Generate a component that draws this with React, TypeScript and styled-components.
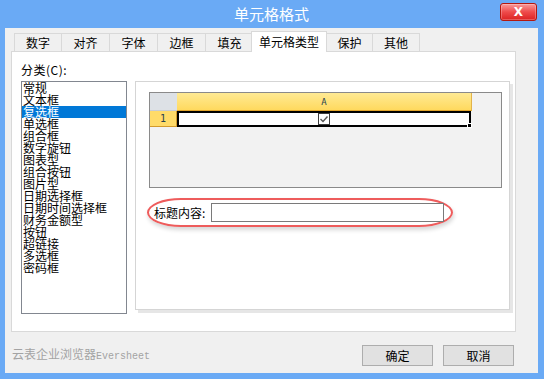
import React from 'react';
import styled, { createGlobalStyle } from 'styled-components';

const GlobalStyle = createGlobalStyle`
  html, body {
    margin: 0;
    padding: 0;
  }
  body {
    font-family: "Noto Sans CJK SC", "Liberation Sans", sans-serif;
    font-size: 12px;
    color: #000;
  }
`;

const Window = styled.div`
  width: 544px;
  height: 379px;
  box-sizing: border-box;
  background: #6aaaf5;
  padding: 0 6px 6px 5px;
  display: flex;
  flex-direction: column;
`;

const TitleBar = styled.div`
  height: 28px;
  flex: none;
  display: grid;
  grid-template-columns: 1fr auto 1fr;
  align-items: start;
`;

const Title = styled.div`
  grid-column: 2;
  color: #fff;
  font-size: 15px;
  line-height: 28px;
`;

const CloseButton = styled.div`
  grid-column: 3;
  justify-self: end;
  margin: 3px 1px 0 0;
  width: 37px;
  height: 18px;
  box-sizing: border-box;
  border: 1px solid #b3180f;
  border-radius: 3px;
  background: linear-gradient(#f99a9a, #ee4b4b 50%, #dc2222);
  box-shadow: inset 0 0 0 1px rgba(255, 255, 255, 0.25);
  color: #fff;
  font-family: "DejaVu Sans", sans-serif;
  font-weight: bold;
  font-size: 12px;
  line-height: 16px;
  text-align: center;
`;

const Client = styled.div`
  flex: 1;
  background: #f0f0f0;
  padding-top: 3px;
  display: flex;
  flex-direction: column;
`;

const TabStrip = styled.div`
  display: flex;
  align-items: flex-end;
  height: 21px;
  padding-left: 9px;
`;

const Tab = styled.div<{ $active?: boolean; $w: number }>`
  box-sizing: border-box;
  width: ${(p) => p.$w}px;
  height: ${(p) => (p.$active ? 21 : 18)}px;
  margin: 0 -1px ${(p) => (p.$active ? 0 : 1)}px ${(p) => (p.$active ? -2 : 0)}px;
  border: 1px solid #d9d9d9;
  border-bottom: none;
  background: ${(p) => (p.$active ? '#fff' : '#f0f0f0')};
  position: relative;
  z-index: ${(p) => (p.$active ? 2 : 1)};
  text-align: center;
  font-size: 12px;
  line-height: ${(p) => (p.$active ? 19 : 17)}px;
`;

const Panel = styled.div`
  margin: -1px 22px 0 6px;
  height: 281px;
  box-sizing: border-box;
  background: #fff;
  border: 1px solid #d9d9d9;
  padding: 11px 0 0 9px;
  display: grid;
  grid-template-columns: 106px 375px;
  grid-template-rows: 14px auto;
  column-gap: 8px;
  row-gap: 4px;
  align-content: start;
`;

const FieldLabel = styled.div`
  grid-column: 1;
  grid-row: 1;
  font-size: 12px;
  line-height: 14px;
  letter-spacing: 0.5px;
  white-space: nowrap;
`;

const ListBox = styled.div`
  grid-column: 1;
  grid-row: 2;
  height: 233px;
  box-sizing: border-box;
  border: 1px solid #828790;
  background: #fff;
`;

const ListItem = styled.div<{ $selected?: boolean }>`
  height: 12px;
  line-height: 12px;
  font-size: 12px;
  padding-left: 1px;
  white-space: nowrap;
  background: ${(p) => (p.$selected ? '#0078d7' : 'transparent')};
  color: ${(p) => (p.$selected ? '#fff' : '#000')};
`;

const GroupBox = styled.div`
  grid-column: 2;
  grid-row: 2;
  height: 229px;
  box-sizing: border-box;
  border: 1px solid #d5d5d5;
  box-shadow: 3px 3px 0 #e6e6e6;
  background: #fff;
  padding: 10px 7px 0 13px;
`;

const Sheet = styled.div`
  height: 96px;
  box-sizing: border-box;
  border: 1px solid #8a8a8a;
  background: #f2f2f2;
  display: grid;
  grid-template-columns: 27px 295px;
  grid-template-rows: 18px 16px;
  align-content: start;
`;

const CornerCell = styled.div`
  background: #dde1e6;
  border-bottom: 1px solid #c9ccd1;
`;

const ColHeader = styled.div`
  box-sizing: border-box;
  background: linear-gradient(#ffea94, #ffd95e);
  border-bottom: 1px solid #e2a52a;
  border-right: 1px solid #e2b34a;
  color: #27434f;
  font-family: "DejaVu Sans Mono", monospace;
  font-size: 9px;
  line-height: 18px;
  text-align: center;
`;

const RowHeader = styled.div`
  box-sizing: border-box;
  background: #ffdb69;
  border-right: 1px solid #d39a2c;
  border-bottom: 1px solid #d39a2c;
  color: #27434f;
  font-family: "DejaVu Sans Mono", monospace;
  font-size: 10px;
  line-height: 15px;
  text-align: center;
`;

const ActiveCell = styled.div`
  position: relative;
  box-sizing: border-box;
  background: #fff;
  border: 2px solid #000;
  margin-right: 1px;
  display: flex;
  align-items: center;
  justify-content: center;
`;

const FillHandle = styled.div`
  position: absolute;
  right: -3px;
  bottom: -3px;
  width: 3px;
  height: 3px;
  background: #000;
  border: 1px solid #fff;
`;

const CheckBox = styled.div`
  width: 12px;
  height: 12px;
  box-sizing: border-box;
  border: 1px solid #3c3c3c;
  background: #fff;
  display: flex;
`;

const CaptionRow = styled.div`
  margin: 10px 0 0 -2px;
  width: 306px;
  height: 29px;
  box-sizing: border-box;
  border: 2px solid #ee5c5c;
  border-radius: 34px / 14.5px;
  box-shadow: 1px 3px 4px rgba(0, 0, 0, 0.16);
  display: flex;
  align-items: center;
  padding-left: 5px;
`;

const CaptionLabel = styled.span`
  width: 57px;
  font-size: 12px;
  line-height: 14px;
  white-space: nowrap;
`;

const CaptionInput = styled.div`
  width: 233px;
  height: 19px;
  box-sizing: border-box;
  border: 1px solid #7a7a7a;
  background: #fff;
`;

const Footer = styled.div`
  flex: 1;
  display: flex;
  align-items: center;
  padding: 6px 24px 0 7px;
`;

const Brand = styled.div`
  color: #a3a3a3;
  font-size: 12px;
  line-height: 14px;
  white-space: nowrap;
`;

const BrandLatin = styled.span`
  font-family: "Liberation Mono", monospace;
  font-size: 10px;
`;

const ButtonGroup = styled.div`
  margin-left: auto;
  display: flex;
  gap: 10px;
`;

const Button = styled.div`
  width: 71px;
  height: 21px;
  box-sizing: border-box;
  border: 1px solid #adadad;
  background: #e1e1e1;
  font-size: 12px;
  line-height: 19px;
  text-align: center;
`;

const tabs = [
  { label: '数字', w: 48 },
  { label: '对齐', w: 49 },
  { label: '字体', w: 49 },
  { label: '边框', w: 49 },
  { label: '填充', w: 49 },
  { label: '单元格类型', w: 76, active: true },
  { label: '保护', w: 47 },
  { label: '其他', w: 48 },
];

const categories = [
  '常规',
  '文本框',
  '复选框',
  '单选框',
  '组合框',
  '数字旋钮',
  '图表型',
  '组合按钮',
  '图片型',
  '日期选择框',
  '日期时间选择框',
  '财务金额型',
  '按钮',
  '超链接',
  '多选框',
  '密码框',
];

const App: React.FC = () => {
  const selected = '复选框';

  return (
    <>
      <GlobalStyle />
      <Window>
        <TitleBar>
          <Title>单元格格式</Title>
          <CloseButton>X</CloseButton>
        </TitleBar>
        <Client>
          <TabStrip>
            {tabs.map((t) => (
              <Tab key={t.label} $w={t.w} $active={t.active}>
                {t.label}
              </Tab>
            ))}
          </TabStrip>
          <Panel>
            <FieldLabel>分类(C):</FieldLabel>
            <ListBox>
              {categories.map((c) => (
                <ListItem key={c} $selected={c === selected}>
                  {c}
                </ListItem>
              ))}
            </ListBox>
            <GroupBox>
              <Sheet>
                <CornerCell />
                <ColHeader>A</ColHeader>
                <RowHeader>1</RowHeader>
                <ActiveCell>
                  <CheckBox>
                    <svg width="10" height="10" viewBox="0 0 10 10">
                      <path d="M1.5 5 L4 7.5 L8.5 2.5" fill="none" stroke="#555" strokeWidth="1.4" />
                    </svg>
                  </CheckBox>
                  <FillHandle />
                </ActiveCell>
              </Sheet>
              <CaptionRow>
                <CaptionLabel>标题内容:</CaptionLabel>
                <CaptionInput />
              </CaptionRow>
            </GroupBox>
          </Panel>
          <Footer>
            <Brand>
              云表企业浏览器<BrandLatin>Eversheet</BrandLatin>
            </Brand>
            <ButtonGroup>
              <Button>确定</Button>
              <Button>取消</Button>
            </ButtonGroup>
          </Footer>
        </Client>
      </Window>
    </>
  );
};

export default App;
